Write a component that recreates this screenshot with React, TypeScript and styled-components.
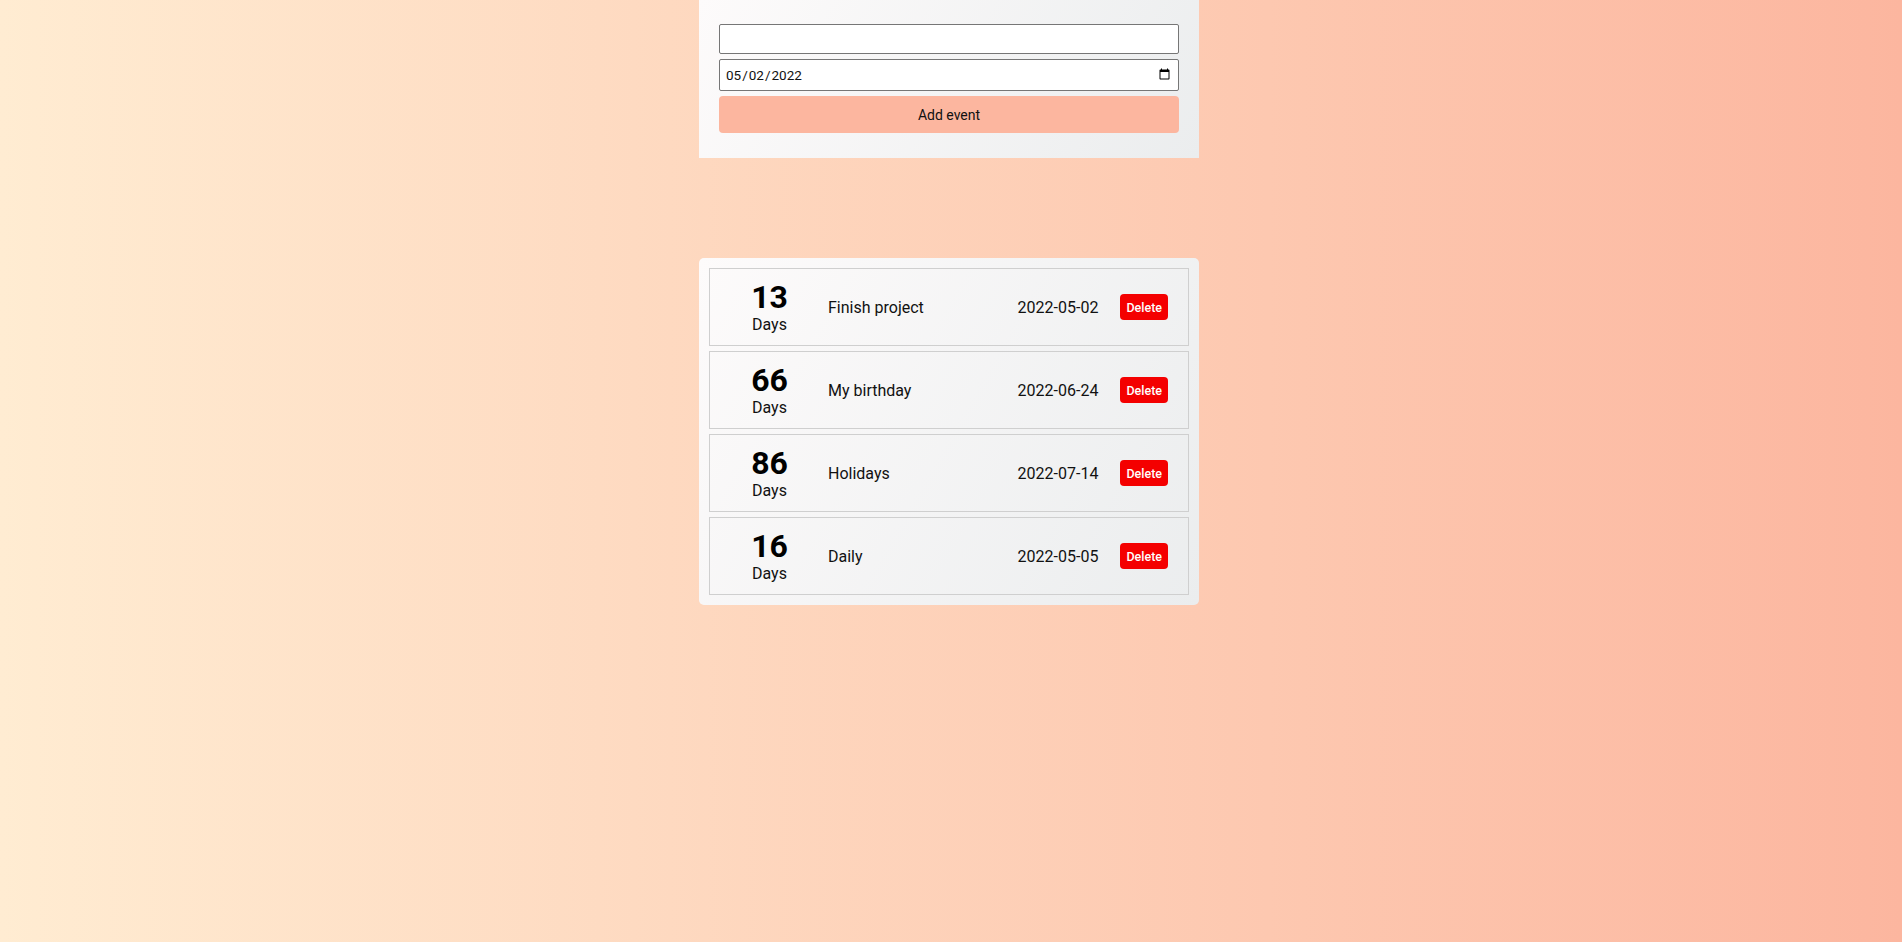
import React from "react";
import styled, { createGlobalStyle } from "styled-components";

const GlobalStyle = createGlobalStyle`
  html, body {
    margin: 0;
    padding: 0;
  }
  body {
    font-family: Roboto, "Liberation Sans", Arial, sans-serif;
    background: linear-gradient(to right, #ffecd2 0%, #fcb69f 100%);
    min-height: 100vh;
  }
  * { box-sizing: border-box; }
`;

const Page = styled.main`
  min-height: 100vh;
  display: flex;
  flex-direction: column;
  align-items: center;
  padding-right: 4px;
`;

const Panel = styled.section<{ $rounded?: boolean }>`
  width: 500px;
  background: linear-gradient(120deg, #fdfbfb 0%, #ebedee 100%);
  border-radius: ${(p) => (p.$rounded ? "5px" : "0")};
`;

const Form = styled(Panel).attrs({ as: "form" })`
  display: flex;
  flex-direction: column;
  gap: 5px;
  padding: 24px 20px 25px 20px;
`;

const TextInput = styled.input`
  width: 100%;
  height: 30px;
  border: 1px solid #767676;
  border-radius: 2px;
  background: #fff;
  padding: 0 6px;
`;

const DateInput = styled.input`
  width: 100%;
  height: 32px;
  border: 1px solid #767676;
  border-radius: 2px;
  background: #fff;
  padding: 0 5px;
  font-family: Roboto, "Liberation Sans", Arial, sans-serif;
  font-size: 13.5px;
  color: #111;
`;

const AddButton = styled.button`
  width: 100%;
  height: 37px;
  border: none;
  border-radius: 4px;
  background: #fcb69f;
  color: #111;
  font-family: Roboto, "Liberation Sans", Arial, sans-serif;
  font-size: 14px;
  cursor: pointer;
`;

const List = styled(Panel)`
  margin-top: 100px;
  padding: 10px;
  display: flex;
  flex-direction: column;
  gap: 5px;
`;

const Item = styled.div`
  height: 78px;
  border: 1px solid #cfcfcf;
  display: grid;
  grid-template-columns: 99px 1fr auto auto;
  align-items: center;
  padding: 0 20px 0 10px;
`;

const Countdown = styled.div`
  display: flex;
  flex-direction: column;
  align-items: center;
`;

const Number = styled.span`
  font-size: 32px;
  line-height: 35px;
  font-weight: 700;
  color: #000;
`;

const Unit = styled.span`
  font-size: 16px;
  line-height: 19px;
  color: #111;
`;

const Title = styled.span`
  font-size: 16px;
  color: #111;
  padding-left: 9px;
`;

const DateText = styled.span`
  font-size: 16px;
  color: #111;
  margin-right: 22px;
`;

const DeleteButton = styled.button`
  height: 26px;
  padding: 0 6px;
  border: none;
  border-radius: 4px;
  background: #f40000;
  color: #fff;
  font-family: Roboto, "Liberation Sans", Arial, sans-serif;
  font-size: 12.5px;
  font-weight: 500;
  cursor: pointer;
`;

const events = [
  { days: 13, title: "Finish project", date: "2022-05-02" },
  { days: 66, title: "My birthday", date: "2022-06-24" },
  { days: 86, title: "Holidays", date: "2022-07-14" },
  { days: 16, title: "Daily", date: "2022-05-05" },
];

export default function App() {
  return (
    <>
      <GlobalStyle />
      <Page>
        <Form onSubmit={(e: React.FormEvent) => e.preventDefault()}>
          <TextInput type="text" />
          <DateInput type="date" defaultValue="2022-05-02" />
          <AddButton type="submit">Add event</AddButton>
        </Form>
        <List $rounded>
          {events.map((ev) => (
            <Item key={ev.title}>
              <Countdown>
                <Number>{ev.days}</Number>
                <Unit>Days</Unit>
              </Countdown>
              <Title>{ev.title}</Title>
              <DateText>{ev.date}</DateText>
              <DeleteButton>Delete</DeleteButton>
            </Item>
          ))}
        </List>
      </Page>
    </>
  );
}
